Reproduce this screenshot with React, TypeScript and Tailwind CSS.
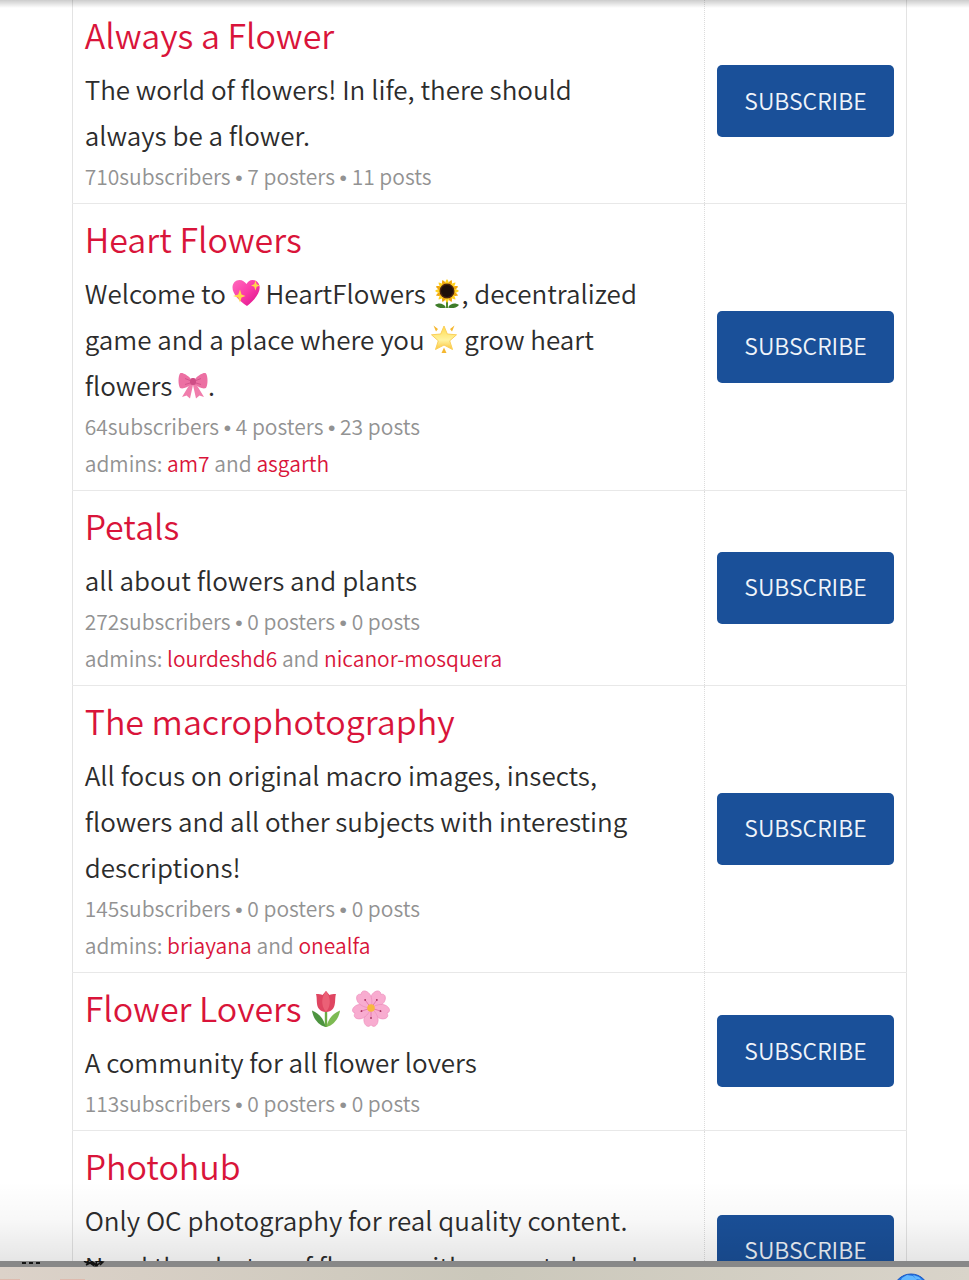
import type { ReactNode } from "react";

function SparklingHeart() {
  return (
    <svg viewBox="0 0 28 28" className="inline-block h-7 w-7 align-[-3px]" role="img" aria-label="sparkling heart">
      <defs>
        <linearGradient id="heart" x1="0" y1="0" x2="1" y2="1">
          <stop offset="0" stopColor="#ff6bbd" />
          <stop offset="0.5" stopColor="#fb3aa8" />
          <stop offset="1" stopColor="#d80f88" />
        </linearGradient>
      </defs>
      <path d="M15 27C7 21.500 0.500 15 0.500 8.500C0.500 4 3.500 1 7.500 1C10.500 1 12.800 2.800 14.500 5C15.800 2.800 17.500 1 20.500 1C24.500 1 27.700 4 27.700 8.500C27.700 15 21.500 22 15 27Z" fill="url(#heart)" />
      <path d="M8 10.500L9.500 15.500L13.500 17L9.500 18.500L8 23.500L6.200 18.500L1 17L6.200 15.500Z" fill="#ffd84a" />
      <path d="M23.500 1.500L24.700 5.200L28 6.500L24.700 7.800L23.500 11.500L22.200 7.800L19 6.500L22.200 5.200Z" fill="#ffd84a" />
    </svg>
  );
}

function Sunflower() {
  const petals = Array.from({ length: 16 }, (_, i) => i * 22.5);
  return (
    <svg viewBox="0 0 30 30" className="inline-block h-[30px] w-[30px] align-[-5px]" role="img" aria-label="sunflower">
      <path d="M14 20h2v9h-2z" fill="#4f8a2b" />
      <path d="M14 28.500C11 23.500 6 24 3 26C6 29.500 11 29.500 14 28.500ZM16 28.500C19 23.500 24 24 27 26C24 29.500 19 29.500 16 28.500Z" fill="#3f7d2a" />
      {petals.map((a) => (
        <path key={a} d="M15 0C17.400 3 17.600 6 15 12C12.400 6 12.600 3 15 0Z" fill={a % 45 === 0 ? "#ffd21f" : "#f0a70c"} transform={`rotate(${a} 15 12)`} />
      ))}
      <circle cx="15" cy="12" r="7.500" fill="#4a2410" />
      <circle cx="15" cy="12" r="6" fill="#1e0f0a" />
    </svg>
  );
}

function GlowingStar() {
  return (
    <svg viewBox="0 0 28 30" className="inline-block h-[30px] w-7 align-[-4px]" role="img" aria-label="glowing star">
      <defs>
        <linearGradient id="star" x1="0" y1="0" x2="0" y2="1">
          <stop offset="0" stopColor="#ffd94a" />
          <stop offset="0.6" stopColor="#fff3a0" />
          <stop offset="1" stopColor="#fbc53c" />
        </linearGradient>
      </defs>
      <path d="M14 2L17.300 10L26.500 10.800L19.700 16.800L22.500 25.500L14 21L5.500 25.500L8.300 16.800L1.500 10.800L10.700 10Z" fill="url(#star)" stroke="#fbd05a" strokeWidth="1" strokeLinejoin="round" />
      <path d="M3.500 1.500L8 5L6 7.500ZM24.500 1.500L20 5L22 7.500ZM14 23.500L16.500 29H11.500Z" fill="#f5b730" />
    </svg>
  );
}

function Ribbon() {
  return (
    <svg viewBox="0 0 30 28" className="inline-block h-7 w-[30px] align-[-3px]" role="img" aria-label="ribbon">
      <path d="M12.500 12L4 26L8.500 24.500L12 27.500L15 14ZM17.500 12L26 26L21.500 24.500L18 27.500L15 14Z" fill="#f07dac" />
      <path d="M12.500 7.500C9 4 4 1 2 2.500C0 5 0 14 2 17C5 18.500 10 16 12.500 13.500ZM17.500 7.500C21 4 26 1 28 2.500C30 5 30 14 28 17C25 18.500 20 16 17.500 13.500Z" fill="#ec70a3" />
      <path d="M12 9.500L7 7.500M12 12L7 13.500M18 9.500L23 7.500M18 12L23 13.500" stroke="#d4558d" strokeWidth="1" />
      <rect x="12" y="7" width="6" height="7" rx="2.500" fill="#cf4d86" />
    </svg>
  );
}

function Tulip() {
  return (
    <svg viewBox="0 0 34 38" className="inline-block h-[38px] w-[34px] align-[-6px]" role="img" aria-label="tulip">
      <path d="M15.800 20h2.400v17h-2.400z" fill="#6cab45" />
      <path d="M16.500 37C15.500 30 11 24 3 20.500C4 28 9 35 16.500 37Z" fill="#4d9440" />
      <path d="M17.500 37C18.500 30 23 24 31 20.500C30 28 25 35 17.500 37Z" fill="#7dba52" />
      <path d="M7 4C10 4 12 4 13.500 5L17 1L20.500 5C22 4 24 4 27 4C25 9 29 21 17 22C5 21 9 10 7 4Z" fill="#df4561" />
      <path d="M17 1C21 6 23 15 17 22C11 15 13 6 17 1Z" fill="#eb6076" />
    </svg>
  );
}

function CherryBlossom() {
  return (
    <svg viewBox="0 0 38 38" className="inline-block h-10 w-10 align-[-6px]" role="img" aria-label="cherry blossom">
      {[36, 108, 180, 252, 324].map((a) => (
        <g key={a} transform={`rotate(${a} 19 19)`}>
          <path d="M19 19C15.500 16.500 11 10.500 12.500 5.500C13.500 2 16.500 0 19 3C21.500 0 24.500 2 25.500 5.500C27 10.500 22.500 16.500 19 19Z" fill="#f8acd0" stroke="#ec8cbb" strokeWidth="0.6" />
          <path d="M19 17V10" stroke="#e06fa5" strokeWidth="0.7" />
          <circle cx="19" cy="9.500" r="0.9" fill="#a8325f" />
        </g>
      ))}
      <circle cx="19" cy="19" r="3.600" fill="#f7b83e" />
    </svg>
  );
}

type Community = {
  name: string;
  title: ReactNode;
  about: ReactNode;
  subscribers: number;
  posters: number;
  posts: number;
  admins?: string[];
};

const communities: Community[] = [
  {
    name: "Always a Flower",
    title: "Always a Flower",
    about: "The world of flowers! In life, there should always be a flower.",
    subscribers: 710,
    posters: 7,
    posts: 11,
  },
  {
    name: "Heart Flowers",
    title: "Heart Flowers",
    about: (
      <>
        Welcome to <SparklingHeart /> HeartFlowers <Sunflower />, decentralized game and a place where you{" "}
        <GlowingStar /> grow heart flowers <Ribbon />.
      </>
    ),
    subscribers: 64,
    posters: 4,
    posts: 23,
    admins: ["am7", "asgarth"],
  },
  {
    name: "Petals",
    title: "Petals",
    about: "all about flowers and plants",
    subscribers: 272,
    posters: 0,
    posts: 0,
    admins: ["lourdeshd6", "nicanor-mosquera"],
  },
  {
    name: "The macrophotography",
    title: "The macrophotography",
    about: "All focus on original macro images, insects, flowers and all other subjects with interesting descriptions!",
    subscribers: 145,
    posters: 0,
    posts: 0,
    admins: ["briayana", "onealfa"],
  },
  {
    name: "Flower Lovers",
    title: (
      <>
        Flower Lovers <Tulip /> <CherryBlossom />
      </>
    ),
    about: "A community for all flower lovers",
    subscribers: 113,
    posters: 0,
    posts: 0,
  },
  {
    name: "Photohub",
    title: "Photohub",
    about: "Only OC photography for real quality content. Need the photos of flowers with a great shape!",
    subscribers: 0,
    posters: 0,
    posts: 0,
    admins: ["photohub", "photos"],
  },
];

function Dot() {
  return <span className="font-['Liberation_Sans',sans-serif] leading-none">•</span>;
}

function CommunityRow({ community }: { community: Community }) {
  const { name, title, about, subscribers, posters, posts, admins } = community;
  return (
    <tr className="border-b border-[#e8e8e8]">
      <td className="border-r border-dotted border-r-[#dcdcdc] pt-1 pr-[54px] pb-2 pl-3 align-top">
        <h2 className="mb-px text-[34px] leading-[61px] font-[350] text-[#d9143a]">
          <a href="#community">{title}</a>
        </h2>
        <p className="text-[26px] leading-[46px] font-[350] text-[#2c2c2c]">{about}</p>
        <p className="text-[21px] leading-[37px] font-[350] text-[#929292]">
          {subscribers}subscribers <Dot /> {posters} posters <Dot /> {posts} posts
        </p>
        {admins && (
          <p className="text-[21px] leading-[37px] font-[350] text-[#929292]">
            admins: <a href="#admin" className="text-[#d9143a]">{admins[0]}</a> and{" "}
            <a href="#admin" className="text-[#d9143a]">{admins[1]}</a>
          </p>
        )}
      </td>
      <td className="w-[202px] px-3 pb-px align-middle">
        <button
          type="button"
          aria-label={`SUBSCRIBE ${name}`}
          className="block h-[72px] w-full rounded-[5px] bg-[#1a5099] pb-[2px] text-[23px] font-[350] text-[#f0f4fa]"
        >
          SUBSCRIBE
        </button>
      </td>
    </tr>
  );
}

export default function App() {
  return (
    <div className="flex h-screen flex-col bg-white font-['Noto_Sans_CJK_SC','Noto_Sans',sans-serif]">
      <main className="relative min-h-0 flex-1 overflow-hidden pr-[6.4%] pl-[7.4%]">
        <table className="w-full border-collapse border-x border-[#e3e3e3]">
          <tbody>
            {communities.map((c) => (
              <CommunityRow key={c.name} community={c} />
            ))}
          </tbody>
        </table>
        <div className="pointer-events-none absolute inset-x-0 top-0 h-2 bg-linear-to-b from-black/20 to-transparent" />
        <div className="pointer-events-none absolute inset-x-0 bottom-0 h-20 bg-linear-to-b from-transparent via-black/3 to-black/10" />
      </main>
      <footer className="flex h-[19px] shrink-0 justify-between border-t-[6px] border-[#888] bg-linear-to-r from-[#dcd2c9] via-[#cbc8bb] to-[#d9d4ca]">
        <svg viewBox="0 0 120 19" className="-mt-[6px] h-[19px] w-[120px]" aria-hidden="true">
          <path d="M22 1h4v2h-4zM29 1h4v2h-4zM36 1h4v2h-4z" fill="#151515" />
          <path d="M84 0L89 3L87 0L93 4L91 0L97 4L96 0L103 1L100 4M86 4L92 1L96 5L101 1" fill="none" stroke="#111" strokeWidth="1.5" />
          <path d="M0 18h20v1H0zM60 18h25v1H60z" fill="#dfb9ad" />
        </svg>
        <svg viewBox="0 0 32 13" className="mr-[42px] h-[13px] w-8" aria-hidden="true">
          <circle cx="16" cy="25" r="18" fill="#2374e4" stroke="#1a58c4" />
          <path d="M7 11L12 8L18 9L22 13H6ZM18 8L24 10L27 13L21 12Z" fill="#62b8ff" />
        </svg>
      </footer>
    </div>
  );
}
